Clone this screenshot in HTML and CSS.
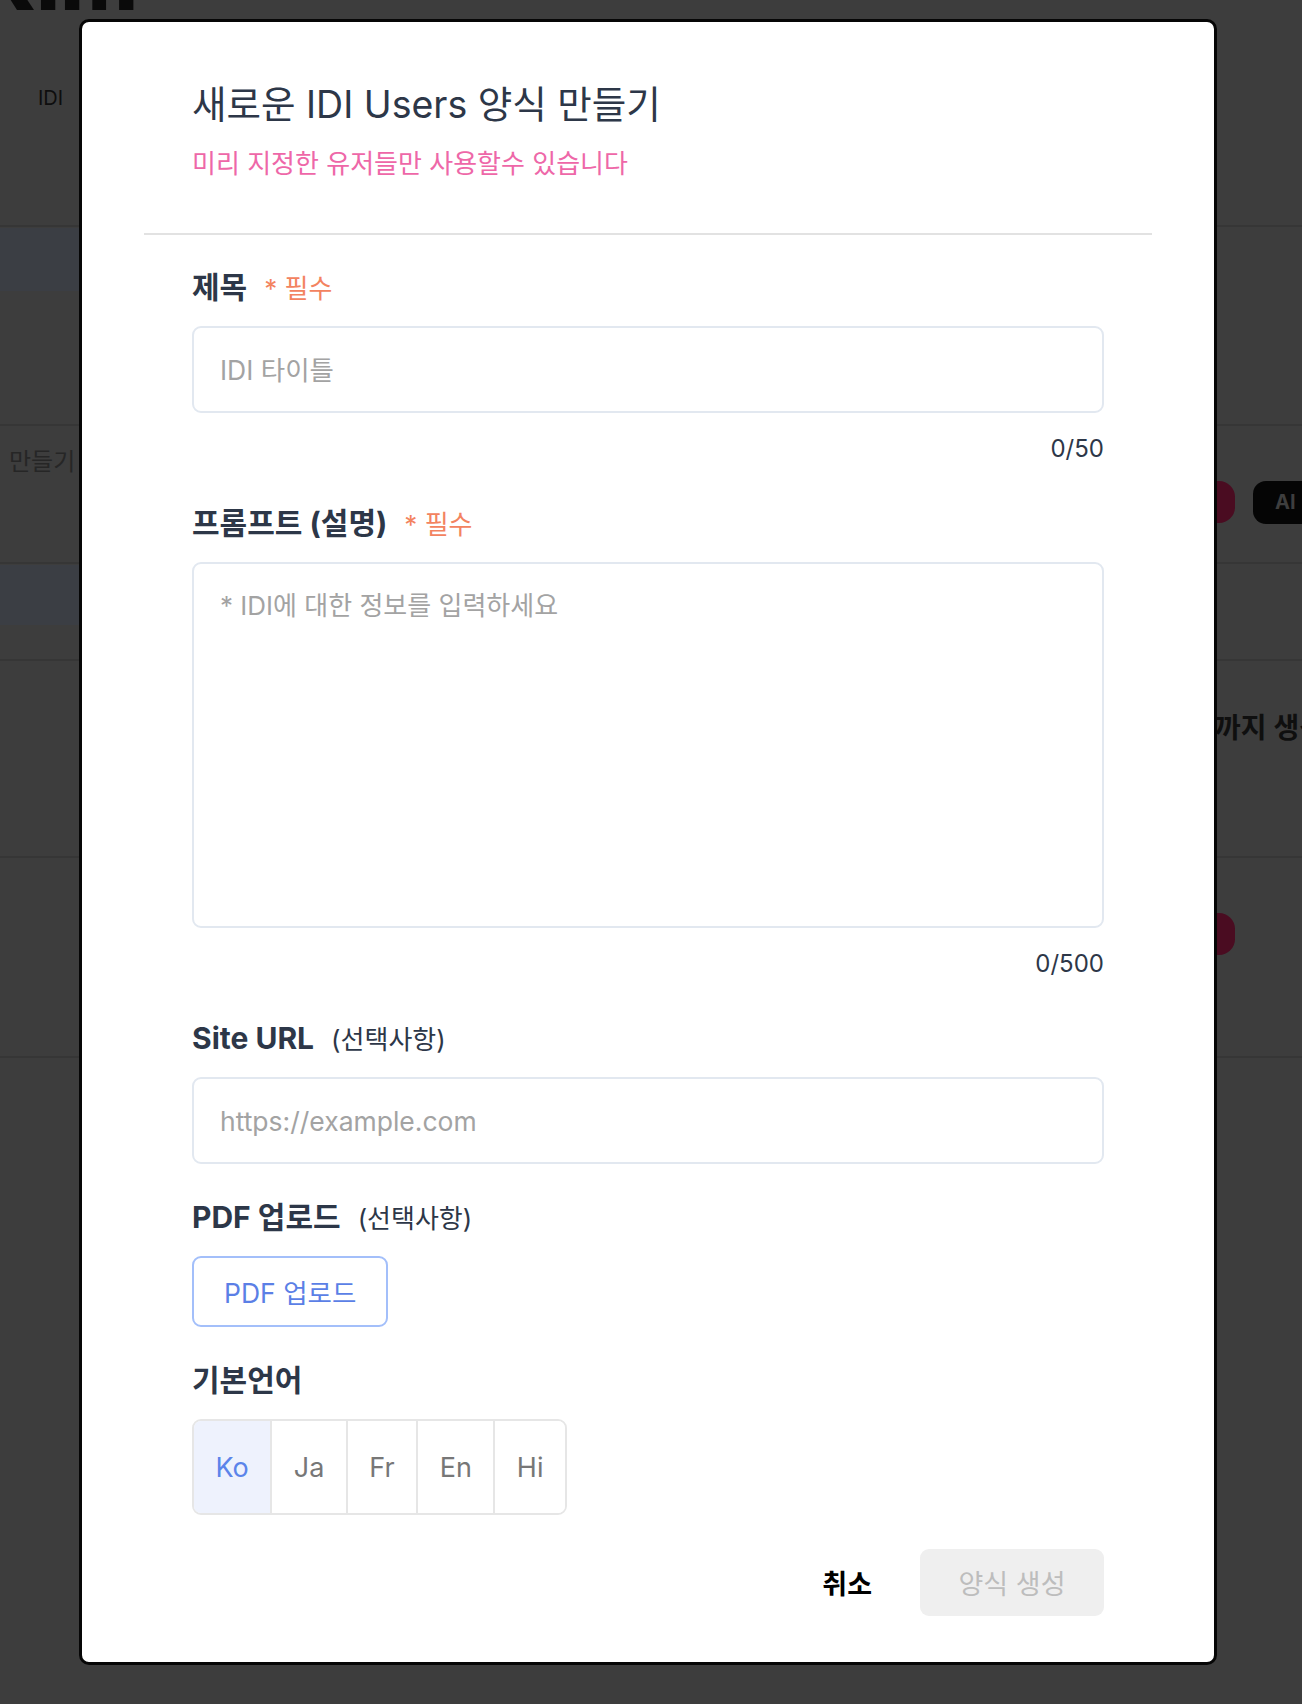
FILE: index.html
```html
<!DOCTYPE html>
<html lang="ko">
<head>
<meta charset="utf-8">
<title>새로운 IDI Users 양식 만들기</title>
<link rel="stylesheet" href="styles.css">
</head>
<body>
<div class="page">
  <header class="page-head">
    <div class="brand">Kim</div>
    <div class="nav">IDI</div>
  </header>
  <div class="row row-a"><div class="cell"><div class="tint"></div></div><div class="cell"></div></div>
  <div class="row row-b">
    <div class="cell"><span class="make">만들기</span></div>
    <div class="cell side"><span class="pill-red"></span><span class="pill-ai">AI</span></div>
  </div>
  <div class="row row-c"><div class="cell"><div class="tint tint-2"></div></div><div class="cell"></div></div>
  <div class="row row-d"><div class="cell"></div><div class="cell side"><span class="until">까지 생성</span></div></div>
  <div class="row row-e"><div class="cell"></div><div class="cell side"><span class="pill-red"></span></div></div>
</div>

<div class="overlay">
  <div class="modal">
    <div class="modal-head">
      <h1 class="title">새로운 IDI Users 양식 만들기</h1>
      <p class="subtitle">미리 지정한 유저들만 사용할수 있습니다</p>
    </div>
    <div class="modal-body">
      <div class="field">
        <div class="label-row"><span class="label">제목</span><span class="req">* 필수</span></div>
        <input class="text-input" type="text" placeholder="IDI 타이틀">
        <div class="counter">0/50</div>
      </div>
      <div class="field">
        <div class="label-row"><span class="label">프롬프트 (설명)</span><span class="req">* 필수</span></div>
        <textarea class="text-area" placeholder="* IDI에 대한 정보를 입력하세요"></textarea>
        <div class="counter">0/500</div>
      </div>
      <div class="field">
        <div class="label-row"><span class="label">Site URL</span><span class="opt">(선택사항)</span></div>
        <input class="text-input" type="text" placeholder="https://example.com">
      </div>
      <div class="field">
        <div class="label-row"><span class="label">PDF 업로드</span><span class="opt">(선택사항)</span></div>
        <button class="pdf-btn" type="button">PDF 업로드</button>
      </div>
      <div class="field">
        <div class="label-row"><span class="label">기본언어</span></div>
        <div class="langs">
          <button class="lang active" type="button">Ko</button>
          <button class="lang" type="button">Ja</button>
          <button class="lang" type="button">Fr</button>
          <button class="lang" type="button">En</button>
          <button class="lang" type="button">Hi</button>
        </div>
      </div>
      <div class="footer">
        <button class="cancel" type="button">취소</button>
        <button class="submit" type="button">양식 생성</button>
      </div>
    </div>
  </div>
</div>
</body>
</html>
```

FILE: styles.css
```css
* { box-sizing: border-box; }

html, body {
  margin: 0;
  height: 1704px;
  overflow: hidden;
}

body {
  background: #3d3d3d;
  font-family: "Inter", "Noto Sans CJK KR", sans-serif;
  color: #2d3748;
}

/* ---------- dimmed page behind the modal ---------- */
.page {
  width: 1302px;
}

.page-head {
  display: flow-root;
  height: 227px;
  border-bottom: 2px solid #363636;
}

.brand {
  font-size: 84px;
  line-height: 84px;
  font-weight: 800;
  color: #0a0a0a;
  margin-top: -62px;
  margin-left: -26px;
}

.nav {
  margin-top: 61px;
  padding-left: 38px;
  font-size: 20px;
  line-height: 30px;
  color: #0e0e0e;
}

.row {
  display: grid;
  grid-template-columns: 1190px 1fr;
  border-bottom: 2px solid #363636;
  overflow: hidden;
}

.row-a { height: 199px; }
.row-b { height: 138px; }
.row-c { height: 97px; }
.row-d { height: 197px; }
.row-e { height: 200px; }

.tint {
  margin-top: 1px;
  width: 200px;
  height: 63px;
  background: #3b3e44;
}

.tint-2 { height: 60px; }

.make {
  display: block;
  margin-top: 20px;
  padding-left: 9px;
  font-size: 24px;
  line-height: 32px;
  color: #262626;
}

.side {
  display: flex;
  align-items: flex-start;
  gap: 18px;
  white-space: nowrap;
}

.pill-red {
  display: block;
  margin-top: 55px;
  width: 45px;
  height: 42px;
  border-radius: 0 16px 16px 0;
  background: #4a0c21;
}

.pill-ai {
  display: block;
  margin-top: 55px;
  width: 80px;
  height: 43px;
  border-radius: 13px;
  background: #050505;
  color: #3e3e3e;
  font-size: 20px;
  font-weight: 700;
  line-height: 43px;
  padding-left: 22px;
}

.until {
  display: block;
  margin-top: 49px;
  padding-left: 25px;
  font-size: 28px;
  line-height: 36px;
  font-weight: 600;
  color: #0f0f0f;
}

/* ---------- modal ---------- */
.overlay {
  position: fixed;
  inset: 0;
  display: flex;
  align-items: flex-start;
  padding: 19px 0 0 79px;
}

.modal {
  width: 1138px;
  background: #ffffff;
  border: 3px solid #060606;
  border-radius: 10px;
  padding: 56px 62px 46px;
}

.modal-head {
  padding: 0 48px 51px;
  border-bottom: 2px solid #e2e2e2;
}

.title {
  margin: 0;
  font-size: 37.5px;
  line-height: 54px;
  font-weight: 400;
  color: #2d3748;
}

.subtitle {
  margin: 14px 0 0;
  font-size: 26px;
  line-height: 36px;
  color: #ee67a8;
}

.modal-body {
  padding: 30px 48px 0;
}

.field + .field {
  margin-top: 31px;
}

.label-row {
  display: flex;
  align-items: baseline;
  gap: 17px;
  margin-bottom: 17px;
  height: 44px;
}

.label {
  font-size: 30px;
  line-height: 44px;
  font-weight: 700;
  color: #2d3748;
}

.req {
  font-size: 26px;
  color: #f38360;
}

.opt {
  font-size: 26px;
  color: #2d3748;
}

.text-input,
.text-area {
  display: block;
  width: 100%;
  border: 2px solid #e2e8f0;
  border-radius: 9px;
  background: #fff;
  font-family: "Inter", "Noto Sans CJK KR", sans-serif;
  color: #2d3748;
  outline: none;
}

.text-input {
  height: 87px;
  padding: 0 26px;
  font-size: 26.5px;
}

.text-area {
  height: 366px;
  padding: 22px 26px;
  font-size: 26px;
  line-height: 40px;
  resize: none;
}

.text-input::placeholder,
.text-area::placeholder {
  color: #a3a3a3;
}

.counter {
  margin-top: 18px;
  padding-bottom: 3px;
  text-align: right;
  font-size: 24px;
  line-height: 36px;
  color: #2d3748;
}

.pdf-btn {
  display: block;
  height: 71px;
  padding: 0 30px;
  border: 2px solid #a3bffa;
  border-radius: 9px;
  background: #fff;
  color: #5b7fe6;
  font-family: "Inter", "Noto Sans CJK KR", sans-serif;
  font-size: 26.5px;
}

.langs {
  display: inline-flex;
  border: 2px solid #e6e6e6;
  border-radius: 9px;
  overflow: hidden;
}

.lang {
  height: 92px;
  padding: 0 21.5px;
  border: 0;
  border-left: 2px solid #e6e6e6;
  background: #fff;
  color: #777777;
  font-family: "Inter", "Noto Sans CJK KR", sans-serif;
  font-size: 27px;
}

.lang:first-child {
  border-left: 0;
}

.lang.active {
  background: #eef2fd;
  color: #5b84ea;
}

.footer {
  display: flex;
  justify-content: flex-end;
  align-items: center;
  gap: 24px;
  margin-top: 34px;
}

.cancel {
  height: 67px;
  padding: 0 24px;
  border: 0;
  background: transparent;
  color: #000;
  font-family: "Inter", "Noto Sans CJK KR", sans-serif;
  font-size: 27px;
  font-weight: 700;
}

.submit {
  width: 184px;
  height: 67px;
  border: 0;
  border-radius: 9px;
  background: #efefef;
  color: #bdbdbd;
  font-family: "Inter", "Noto Sans CJK KR", sans-serif;
  font-size: 27px;
}
```
